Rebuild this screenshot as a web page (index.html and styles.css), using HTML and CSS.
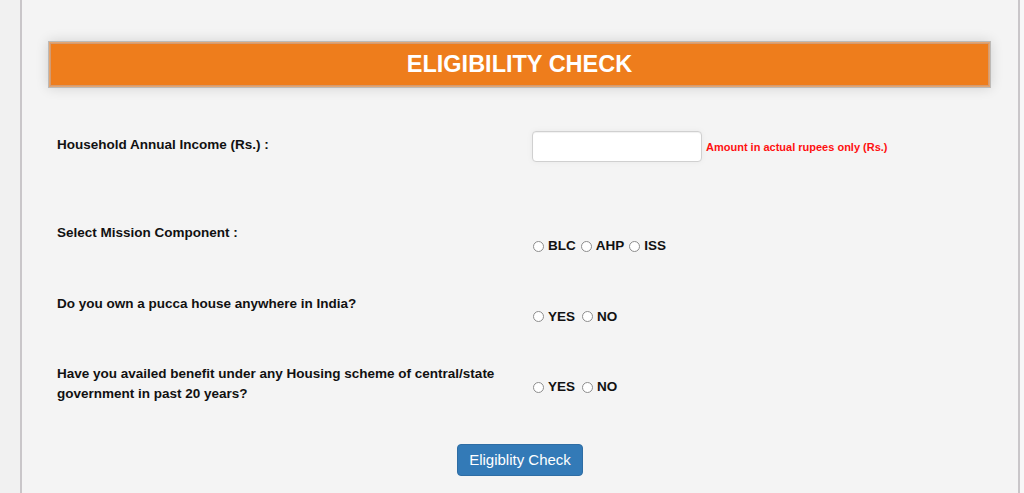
FILE: index.html
```html
<!DOCTYPE html>
<html lang="en">
<head>
    <meta charset="UTF-8">
    <meta name="viewport" content="width=device-width, initial-scale=1.0">
    <title>Eligibility Check</title>
    <link rel="stylesheet" href="styles.css">
</head>
<body>
    <div class="pagina">
        <div class="titulo">ELIGIBILITY CHECK</div>

        <div class="fila fila-ingreso">
            <label class="etiqueta" for="ingreso">Household Annual Income (Rs.) :</label>
            <div class="valor valor-ingreso">
                <input type="text" id="ingreso" class="caja">
                <span class="nota">Amount in actual rupees only (Rs.)</span>
            </div>
        </div>

        <div class="fila">
            <div class="etiqueta">Select Mission Component :</div>
            <div class="valor opciones">
                <label><input type="radio" name="componente"> BLC</label>
                <label><input type="radio" name="componente"> AHP</label>
                <label><input type="radio" name="componente"> ISS</label>
            </div>
        </div>

        <div class="fila">
            <div class="etiqueta">Do you own a pucca house anywhere in India?</div>
            <div class="valor opciones">
                <label class="ancho"><input type="radio" name="casa"> YES</label>
                <label><input type="radio" name="casa"> NO</label>
            </div>
        </div>

        <div class="fila">
            <div class="etiqueta">Have you availed benefit under any Housing scheme of central/state government in past 20 years?</div>
            <div class="valor opciones">
                <label class="ancho"><input type="radio" name="beneficio"> YES</label>
                <label><input type="radio" name="beneficio"> NO</label>
            </div>
        </div>

        <div class="acciones">
            <button type="button" class="boton">Eligiblity Check</button>
        </div>
    </div>
</body>
</html>
```

FILE: styles.css
```css
body {
    margin: 0;
    background: linear-gradient(to right, #f1f1f1 0, #f1f1f1 20px, #f7f7f7 20px);
    font-family: "Liberation Sans", Arial, sans-serif;
    color: #111;
    height: 493px;
    overflow: hidden;
}
.pagina {
    box-sizing: border-box;
    margin-left: 20px;
    width: 1000px;
    height: 100%;
    background: #f4f4f4;
    border-left: 2px solid #c9c6c9;
    border-right: 2px solid #c9c6c9;
    padding-top: 41px;
}
.titulo {
    margin: 0 27px 0 26px;
    height: 45px;
    line-height: 44px;
    background: #ee7d1c;
    border: 1px solid #bdbab7;
    box-shadow: inset 0 0 0 1px #e4a672, inset 0 0 0 2px #d39a70, 0 0 12px rgba(0, 0, 0, 0.14);
    color: white;
    font-size: 23.5px;
    font-weight: bold;
    text-align: center;
}
.fila {
    display: grid;
    grid-template-columns: 475px 1fr;
    align-items: start;
    padding-left: 35px;
    margin-bottom: 37.5px;
}
.fila-ingreso {
    margin-top: 43px;
    margin-bottom: 61px;
}
.etiqueta {
    font-size: 13.5px;
    font-weight: bold;
    line-height: 20px;
    padding-right: 30px;
}
.fila-ingreso .etiqueta {
    padding-top: 4px;
}
.valor-ingreso {
    display: flex;
    align-items: center;
}
.caja {
    box-sizing: border-box;
    width: 170px;
    height: 31px;
    margin: 0;
    border: 1px solid #d0d0d0;
    border-radius: 4px;
    background: white;
    box-shadow: inset 0 1px 1px rgba(0, 0, 0, 0.06), 0 0 6px rgba(0, 0, 0, 0.05);
}
.nota {
    margin-left: 4px;
    color: #ff1010;
    font-size: 11px;
    font-weight: bold;
}
.opciones {
    display: flex;
    padding-top: 13px;
    line-height: 20px;
    font-size: 13.5px;
    font-weight: bold;
}
.opciones label {
    display: flex;
    align-items: center;
    margin-right: 4px;
}
.opciones label.ancho {
    margin-right: 6px;
}
.opciones input {
    appearance: none;
    box-sizing: border-box;
    width: 11px;
    height: 11px;
    margin: 0 4px 0 1px;
    border: 1px solid #8d8d8d;
    border-radius: 50%;
    background: white;
}
.acciones {
    display: flex;
    justify-content: center;
    padding-top: 2px;
}
.boton {
    background: #337ab7;
    border: 1px solid #2e6da4;
    border-radius: 4px;
    color: white;
    font-family: "Liberation Sans", Arial, sans-serif;
    font-size: 15px;
    line-height: 20px;
    padding: 5px 11px;
}
```
